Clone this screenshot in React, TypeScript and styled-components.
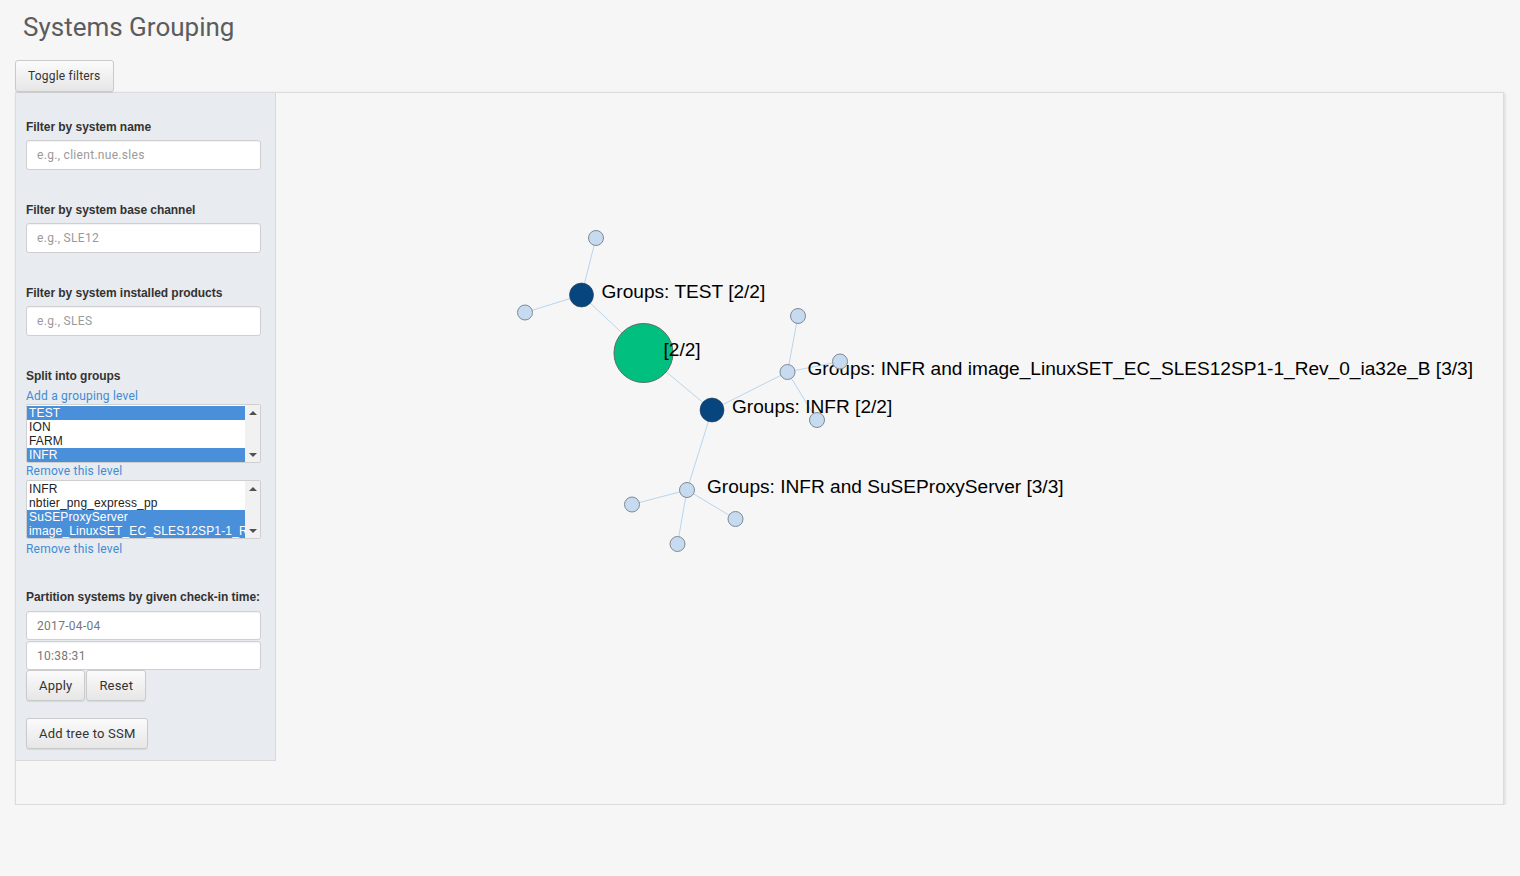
import React from "react";
import styled, { createGlobalStyle } from "styled-components";

const Global = createGlobalStyle`
  html, body { margin: 0; padding: 0; background: #f6f6f6; }
  body { font-family: Roboto, "Liberation Sans", Arial, sans-serif; color: #333; }
  * { box-sizing: border-box; }
`;

const Page = styled.div`
  padding: 0 16px 0 15px;
  width: 1520px;
`;

const Title = styled.h1`
  margin: 0;
  padding: 10px 0 0 8px;
  height: 60px;
  font-family: Roboto, sans-serif;
  font-weight: 400;
  font-size: 26px;
  line-height: 34px;
  color: #5c5c5c;
`;

const Button = styled.button<{ $small?: boolean }>`
  height: ${(p) => (p.$small ? 32 : 31)}px;
  padding: 0 12px;
  border: 1px solid #cacaca;
  border-radius: 3px;
  background: linear-gradient(#fbfbfb, #e6e6e6);
  box-shadow: 0 1px 1px rgba(0, 0, 0, 0.08);
  font-family: Roboto, sans-serif;
  font-size: ${(p) => (p.$small ? 12 : 13)}px;
  letter-spacing: 0.2px;
  color: #333;
  cursor: pointer;
`;

const Panel = styled.div`
  display: flex;
  align-items: flex-start;
  width: 1489px;
  height: 713px;
  border: 1px solid #dcdcdc;
  box-shadow: 1px 1px 3px rgba(0, 0, 0, 0.12);
  background: #f6f6f6;
`;

const Sidebar = styled.div`
  width: 260px;
  flex: none;
  background: #e8ebef;
  border-right: 1px solid #d9d9d9;
  border-bottom: 1px solid #d9d9d9;
  padding: 26px 14px 11px 10px;
`;

const Group = styled.div<{ $gap?: number }>`
  margin-bottom: ${(p) => p.$gap ?? 32}px;
`;

const Label = styled.div<{ $mb?: number }>`
  font-family: "Liberation Sans", Arial, sans-serif;
  font-weight: bold;
  font-size: 12px;
  line-height: 17px;
  color: #333;
  white-space: nowrap;
  letter-spacing: -0.05px;
  margin-bottom: ${(p) => p.$mb ?? 4}px;
`;

const Input = styled.div<{ $h?: number; $value?: boolean; $mb?: number }>`
  height: ${(p) => p.$h ?? 30}px;
  margin-bottom: ${(p) => p.$mb ?? 0}px;
  background: #fff;
  border: 1px solid #cfcfcf;
  border-radius: 3px;
  box-shadow: inset 0 1px 1px rgba(0, 0, 0, 0.05);
  padding: 0 10px;
  display: flex;
  align-items: center;
  font-family: Roboto, sans-serif;
  font-size: 12px;
  letter-spacing: 0.3px;
  color: ${(p) => (p.$value ? "#777" : "#9a9a9a")};
`;

const Link = styled.div<{ $lh: number }>`
  font-family: Roboto, sans-serif;
  font-size: 12px;
  letter-spacing: 0.2px;
  line-height: ${(p) => p.$lh}px;
  color: #3f8bd4;
`;

const SelectBox = styled.div`
  height: 59px;
  background: #fff;
  border: 1px solid #cfcfcf;
  border-radius: 2px;
  display: flex;
  overflow: hidden;
`;

const Options = styled.div`
  flex: 1;
  min-width: 0;
  padding-top: 1px;
`;

const Option = styled.div<{ $sel?: boolean }>`
  height: 14px;
  line-height: 14px;
  padding-left: 2px;
  font-family: "Liberation Sans", Arial, sans-serif;
  font-size: 12px;
  letter-spacing: 0.15px;
  white-space: nowrap;
  overflow: hidden;
  color: ${(p) => (p.$sel ? "#fff" : "#222")};
  background: ${(p) => (p.$sel ? "#4a8fd9" : "transparent")};
`;

const ScrollBar = styled.div`
  width: 15px;
  flex: none;
  background: #f1f1f1;
  display: flex;
  flex-direction: column;
  justify-content: space-between;
  align-items: center;
  padding: 6px 0 5px;
`;

const Arrow = styled.div<{ $up?: boolean }>`
  width: 0;
  height: 0;
  border-left: 4px solid transparent;
  border-right: 4px solid transparent;
  ${(p) =>
    p.$up ? "border-bottom: 4px solid #505050;" : "border-top: 4px solid #505050;"}
`;

const ButtonRow = styled.div`
  display: flex;
  gap: 1px;
  margin-bottom: 17px;
`;

const GraphArea = styled.div`
  flex: 1;
  height: 711px;
`;

type Opt = { t: string; sel?: boolean };

const Select: React.FC<{ opts: Opt[] }> = ({ opts }) => (
  <SelectBox>
    <Options>
      {opts.map((o) => (
        <Option key={o.t} $sel={o.sel}>
          {o.t}
        </Option>
      ))}
    </Options>
    <ScrollBar>
      <Arrow $up />
      <Arrow />
    </ScrollBar>
  </SelectBox>
);

type N = { id: string; x: number; y: number; r: number; kind: "root" | "group" | "leaf"; label?: string };

const OX = 276;
const OY = 93;
const nodes: N[] = [
  { id: "root", x: 643.5, y: 353, r: 29.5, kind: "root", label: "[2/2]" },
  { id: "test", x: 581.5, y: 295, r: 12, kind: "group", label: "Groups: TEST [2/2]" },
  { id: "t1", x: 596, y: 238, r: 7.5, kind: "leaf" },
  { id: "t2", x: 525, y: 312.5, r: 7.5, kind: "leaf" },
  { id: "infr", x: 712, y: 410, r: 12, kind: "group", label: "Groups: INFR [2/2]" },
  { id: "a", x: 787.5, y: 372, r: 7.5, kind: "leaf", label: "Groups: INFR and image_LinuxSET_EC_SLES12SP1-1_Rev_0_ia32e_B [3/3]" },
  { id: "a1", x: 798, y: 316, r: 7.5, kind: "leaf" },
  { id: "a2", x: 840, y: 361.5, r: 7.5, kind: "leaf" },
  { id: "a3", x: 817, y: 420, r: 7.5, kind: "leaf" },
  { id: "b", x: 687, y: 490, r: 7.5, kind: "leaf", label: "Groups: INFR and SuSEProxyServer [3/3]" },
  { id: "b1", x: 632, y: 504.5, r: 7.5, kind: "leaf" },
  { id: "b2", x: 677.5, y: 544, r: 7.5, kind: "leaf" },
  { id: "b3", x: 735.5, y: 519, r: 7.5, kind: "leaf" },
];

const links: [string, string][] = [
  ["root", "test"],
  ["root", "infr"],
  ["test", "t1"],
  ["test", "t2"],
  ["infr", "a"],
  ["infr", "b"],
  ["a", "a1"],
  ["a", "a2"],
  ["a", "a3"],
  ["b", "b1"],
  ["b", "b2"],
  ["b", "b3"],
];

const byId = (id: string) => nodes.find((n) => n.id === id)!;

const fills = { root: "#00bf7f", group: "#07457f", leaf: "#c6dbef" };
const strokes = { root: "#5a6b63", group: "#2a3f55", leaf: "#7d8a96" };

const Graph: React.FC = () => (
  <svg width="100%" height="100%" viewBox="0 0 1227 711">
    {links.map(([s, t]) => {
      const a = byId(s);
      const b = byId(t);
      return (
        <line
          key={s + t}
          x1={a.x - OX}
          y1={a.y - OY}
          x2={b.x - OX}
          y2={b.y - OY}
          stroke="#b9d5ec"
          strokeWidth={1}
        />
      );
    })}
    {nodes.map((n) => (
      <g key={n.id}>
        <circle
          cx={n.x - OX}
          cy={n.y - OY}
          r={n.r}
          fill={fills[n.kind]}
          stroke={strokes[n.kind]}
          strokeWidth={n.kind === "group" ? 0.6 : 1}
        />
        {n.label && (
          <text
            x={n.x - OX + 20}
            y={n.y - OY + 3}
            fontFamily="'Liberation Sans', Arial, sans-serif"
            fontSize={19.1}
            fill="#000"
          >
            {n.label}
          </text>
        )}
      </g>
    ))}
  </svg>
);

export default function App() {
  return (
    <Page>
      <Global />
      <Title>Systems Grouping</Title>
      <Button $small>Toggle filters</Button>
      <Panel>
        <Sidebar>
          <Group>
            <Label>Filter by system name</Label>
            <Input>e.g., client.nue.sles</Input>
          </Group>
          <Group>
            <Label>Filter by system base channel</Label>
            <Input>e.g., SLE12</Input>
          </Group>
          <Group>
            <Label>Filter by system installed products</Label>
            <Input>e.g., SLES</Input>
          </Group>
          <Group $gap={30}>
            <Label>Split into groups</Label>
            <Link $lh={15}>Add a grouping level</Link>
            <Select
              opts={[
                { t: "TEST", sel: true },
                { t: "ION" },
                { t: "FARM" },
                { t: "INFR", sel: true },
              ]}
            />
            <Link $lh={17}>Remove this level</Link>
            <Select
              opts={[
                { t: "INFR" },
                { t: "nbtier_png_express_pp" },
                { t: "SuSEProxyServer", sel: true },
                { t: "image_LinuxSET_EC_SLES12SP1-1_Rev_0_ia32e_B", sel: true },
              ]}
            />
            <Link $lh={20}>Remove this level</Link>
          </Group>
          <Group $gap={0}>
            <Label $mb={5}>Partition systems by given check-in time:</Label>
            <Input $h={29} $mb={1} $value>
              2017-04-04
            </Input>
            <Input $h={29} $value>
              10:38:31
            </Input>
            <ButtonRow>
              <Button>Apply</Button>
              <Button>Reset</Button>
            </ButtonRow>
            <Button>Add tree to SSM</Button>
          </Group>
        </Sidebar>
        <GraphArea>
          <Graph />
        </GraphArea>
      </Panel>
    </Page>
  );
}
